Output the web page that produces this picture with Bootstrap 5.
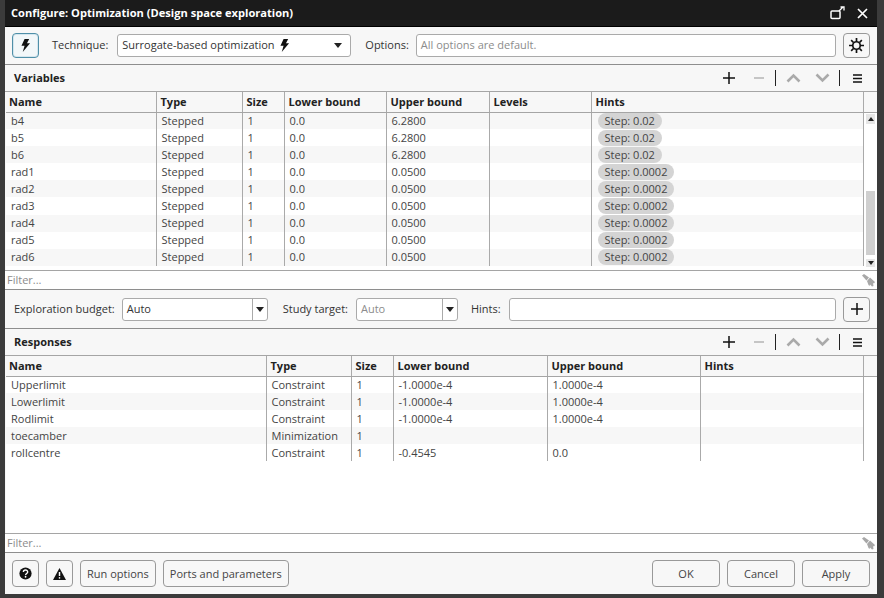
<!DOCTYPE html>
<html lang="en"><head><meta charset="utf-8">
<title>Configure</title>
<link href="https://cdn.jsdelivr.net/npm/bootstrap@5.3.0/dist/css/bootstrap.min.css" rel="stylesheet">
<style>
html,body{height:100%;margin:0}
body{background:#3b3b3b;font-family:"Open Sans",sans-serif;font-size:11px;color:#333;overflow:hidden}
.win{width:872px;height:594px;margin-left:5px;background:#f7f7f7;display:flex;flex-direction:column}
.ttl{height:27px;background:#1b1b1b;color:#fff;font-weight:700;font-size:11.1px;padding:0 9px 0 6px;flex:none;border-bottom:1px solid #000}
.ttl-ic{column-gap:12px}
.bar{height:38px;flex:none;padding:0 7px;gap:6px;border-bottom:1px solid #8e8e8e}
.bar2{height:39px}
.sec{height:27px;flex:none;padding:0 5px 0 9px;border-bottom:1px solid #a5a5a5;font-weight:700;color:#222}
.fld{height:23px;border:1px solid #aaa;border-radius:3px;background:#fff;padding:0 4px;display:flex;align-items:center;color:#333;white-space:nowrap}
.fld.dim{color:#8c8c8c}
.ib{width:27px;height:25px;padding:0;border:1px solid #999;border-radius:4px;background:#f7f7f7;display:flex;align-items:center;justify-content:center;flex:none}
.ib.act{border-color:#4f8fa8;background:#f2f7f9;box-shadow:inset 0 0 0 1px #d4e6ee}
.tb{height:27px;border:1px solid #999;border-radius:4px;background:#f7f7f7;color:#444;font-size:11px;padding:0 6px;line-height:1}
.tb.wd{width:68px}
.tools svg{display:block}
.tools>span{width:29px;display:flex;justify-content:center}
.tools>span.vs{width:1px;height:16px;background:#222;flex:none;margin:0 2px}
.tools>span.vs.a{margin-right:3px}
.tools>span.p{margin-right:1px}
.tools>span.m{width:30px}
.tw{flex:none;display:flex;margin-left:1px;background:#fff}
.tv{height:178px}
.tr2{flex:1 1 auto;min-height:0}
table.g{table-layout:fixed;border-collapse:collapse;width:858px;margin:0;color:#444;flex:none;height:0}
table.g th{height:20px;background:#f7f7f7;font-weight:700;color:#222;border-bottom:1px solid #a5a5a5;border-right:1px solid #aaa;padding:0 0 0 4px;white-space:nowrap}
table.g th:first-child{padding-left:3px}
table.g td{height:17.1px;padding:0 0 0 5px;border-right:1px solid #aaa;line-height:16px;white-space:nowrap;background:#fff}
table.v tr:nth-child(odd) td,table.r tr:nth-child(even) td{background:#f7f7f7}
.v th:nth-child(1){width:150px}.v th:nth-child(2){width:86px}.v th:nth-child(3){width:42px}.v th:nth-child(4){width:102px}.v th:nth-child(5){width:103px}.v th:nth-child(6){width:102px}
.r th:nth-child(1){width:260px}.r th:nth-child(2){width:85px}.r th:nth-child(3){width:42px}.r th:nth-child(4){width:154px}.r th:nth-child(5){width:153px}
.pill{display:inline-block;background:#d4d4d4;border-radius:8px;padding:0 7px;height:16px;line-height:16px;margin-left:1px;color:#444}
.sb{width:13px;flex:none;background:#fff;display:flex;flex-direction:column}
.hd{height:21px;border-bottom:1px solid #a5a5a5;background:#f7f7f7;flex:none}
.sb i{display:block;height:10px;background:#e6e6e6;position:relative;margin:1px 2px 0;flex:none}
.sb i::after{content:"";position:absolute;left:2px;top:3px;border:3px solid transparent;border-top:0;border-bottom:4px solid #222}
.sb i.dn{margin-top:4px;height:8px}
.sb i.dn::after{transform:rotate(180deg);top:2px}
.sb b{display:block;background:#cfcfcf;margin:0 2px;flex:none;height:64px}
.sb u{display:block;flex:none;height:67px}
.flt{height:18px;flex:none;background:#fff;border-top:1px solid #a5a5a5;border-bottom:1px solid #8e8e8e;padding:0 2px;color:#8c8c8c;box-sizing:content-box}
.caret{width:0;height:0;border:4px solid transparent;border-bottom:0;border-top:5px solid #222}
.sp{width:15px;border-left:1px solid #aaa;align-self:stretch;display:flex;align-items:center;justify-content:center;margin-right:-4px;margin-left:auto}
.foot{height:41px;flex:none;padding:0 7px;gap:7px}
.l-tech{margin-left:7px;margin-right:3px}
.f-tech{width:234px}
.l-opt{margin-left:8px;margin-right:1px}
.f-opt{margin-right:1px}
.l-exp{margin-left:2px;margin-right:1px}
.f-exp{width:146px}
.l-study{margin-left:9px;margin-right:2px}
.f-study{width:102px}
.l-hint{margin-left:7px;margin-right:2px}
</style></head>
<body>
<svg width="0" height="0" class="d-none"><defs>
<symbol id="bolt" viewBox="0 0 12 14"><path d="M5 0h5L7.600 4.600H11L3 14l2-6.600H1.600z" fill="#111"/></symbol>
<symbol id="plus" viewBox="0 0 12 12"><path d="M6 0v12M0 6h12" stroke="#111" stroke-width="1.500" fill="none"/></symbol>
<symbol id="minus" viewBox="0 0 12 12"><path d="M1 6h10" stroke="#b5b5b5" stroke-width="1.500" fill="none"/></symbol>
<symbol id="up" viewBox="0 0 15 10"><path d="M1.500 8.500l6-6 6 6" stroke="#aaa" stroke-width="2.600" fill="none"/></symbol>
<symbol id="down" viewBox="0 0 15 10"><path d="M1.500 1.500l6 6 6-6" stroke="#aaa" stroke-width="2.600" fill="none"/></symbol>
<symbol id="menu" viewBox="0 0 9 9"><path d="M0 1h9M0 4.500h9M0 8h9" stroke="#111" stroke-width="1.500" fill="none"/></symbol>
<symbol id="brush" viewBox="0 0 13 13"><path d="M0 1.500L2 0l5 3.500-2.500 3z" fill="#a8a8a8"/><path d="M5 7l3-3.500 5 4.500-1 1.500-1-.5.500 3-1.500.500-2-2-.5 1.500-1-1z" fill="#a8a8a8"/></symbol>
</defs></svg>
<div class="win">
 <div class="ttl d-flex align-items-center justify-content-between">
  <span>Configure: Optimization (Design space exploration)</span>
  <span class="ttl-ic d-flex align-items-center">
   <svg width="15" height="14" viewBox="0 0 15 14"><rect x="1" y="5" width="9" height="7.500" rx="1" fill="none" stroke="#fff" stroke-width="1.500"/><path d="M9 5l4-4M10.500 1H14v3.500" stroke="#fff" stroke-width="1.300" fill="none"/></svg>
   <svg width="11" height="11" viewBox="0 0 11 11"><path d="M1 1l9 9M10 1l-9 9" stroke="#fff" stroke-width="1.700"/></svg>
  </span>
 </div>
 <div class="bar d-flex align-items-center">
  <button class="ib act" type="button"><svg width="11" height="13"><use href="#bolt"/></svg></button>
  <span class="l-tech">Technique:</span>
  <div class="fld f-tech"><span>Surrogate-based optimization</span><svg class="ms-1" width="11" height="13"><use href="#bolt"/></svg><span class="caret ms-auto me-1"></span></div>
  <span class="l-opt">Options:</span>
  <div class="fld f-opt dim flex-grow-1">All options are default.</div>
  <button class="ib" type="button"><svg width="15" height="15" viewBox="0 0 16 16"><circle cx="8" cy="8" r="4" fill="none" stroke="#111" stroke-width="1.800"/><path d="M8 0v3.500M8 12.500V16M0 8h3.500M12.500 8H16M2.300 2.300l2.500 2.500M11.200 11.200l2.500 2.500M13.700 2.300l-2.500 2.500M4.800 11.200l-2.500 2.500" stroke="#111" stroke-width="1.800"/></svg></button>
 </div>
 <div class="sec d-flex align-items-center justify-content-between">
  <span>Variables</span>
  <div class="tools d-flex align-items-center">
   <span class="p"><svg width="12" height="12"><use href="#plus"/></svg></span><span><svg width="12" height="12"><use href="#minus"/></svg></span><span class="vs a"></span>
   <span><svg width="15" height="10"><use href="#up"/></svg></span><span><svg width="15" height="10"><use href="#down"/></svg></span><span class="vs"></span>
   <span class="m"><svg width="9" height="9"><use href="#menu"/></svg></span>
  </div>
 </div>
 <div class="tw tv">
  <table class="g v"><thead><tr><th>Name</th><th>Type</th><th>Size</th><th>Lower bound</th><th>Upper bound</th><th>Levels</th><th>Hints</th></tr></thead><tbody>
  <tr><td>b4</td><td>Stepped</td><td>1</td><td>0.0</td><td>6.2800</td><td></td><td><span class="pill">Step: 0.02</span></td></tr>
  <tr><td>b5</td><td>Stepped</td><td>1</td><td>0.0</td><td>6.2800</td><td></td><td><span class="pill">Step: 0.02</span></td></tr>
  <tr><td>b6</td><td>Stepped</td><td>1</td><td>0.0</td><td>6.2800</td><td></td><td><span class="pill">Step: 0.02</span></td></tr>
  <tr><td>rad1</td><td>Stepped</td><td>1</td><td>0.0</td><td>0.0500</td><td></td><td><span class="pill">Step: 0.0002</span></td></tr>
  <tr><td>rad2</td><td>Stepped</td><td>1</td><td>0.0</td><td>0.0500</td><td></td><td><span class="pill">Step: 0.0002</span></td></tr>
  <tr><td>rad3</td><td>Stepped</td><td>1</td><td>0.0</td><td>0.0500</td><td></td><td><span class="pill">Step: 0.0002</span></td></tr>
  <tr><td>rad4</td><td>Stepped</td><td>1</td><td>0.0</td><td>0.0500</td><td></td><td><span class="pill">Step: 0.0002</span></td></tr>
  <tr><td>rad5</td><td>Stepped</td><td>1</td><td>0.0</td><td>0.0500</td><td></td><td><span class="pill">Step: 0.0002</span></td></tr>
  <tr><td>rad6</td><td>Stepped</td><td>1</td><td>0.0</td><td>0.0500</td><td></td><td><span class="pill">Step: 0.0002</span></td></tr>
  </tbody></table>
  <div class="sb"><div class="hd"></div><i></i><u></u><b></b><i class="dn"></i></div>
 </div>
 <div class="flt d-flex align-items-center justify-content-between"><span>Filter...</span><svg width="13" height="13"><use href="#brush"/></svg></div>
 <div class="bar bar2 d-flex align-items-center">
  <span class="l-exp">Exploration budget:</span>
  <div class="fld f-exp"><span>Auto</span><span class="sp"><span class="caret"></span></span></div>
  <span class="l-study">Study target:</span>
  <div class="fld dim f-study"><span>Auto</span><span class="sp"><span class="caret"></span></span></div>
  <span class="l-hint">Hints:</span>
  <div class="fld f-opt flex-grow-1"></div>
  <button class="ib" type="button"><svg width="12" height="12"><use href="#plus"/></svg></button>
 </div>
 <div class="sec d-flex align-items-center justify-content-between">
  <span>Responses</span>
  <div class="tools d-flex align-items-center">
   <span class="p"><svg width="12" height="12"><use href="#plus"/></svg></span><span><svg width="12" height="12"><use href="#minus"/></svg></span><span class="vs a"></span>
   <span><svg width="15" height="10"><use href="#up"/></svg></span><span><svg width="15" height="10"><use href="#down"/></svg></span><span class="vs"></span>
   <span class="m"><svg width="9" height="9"><use href="#menu"/></svg></span>
  </div>
 </div>
 <div class="tw tr2 align-items-start">
  <table class="g r"><thead><tr><th>Name</th><th>Type</th><th>Size</th><th>Lower bound</th><th>Upper bound</th><th>Hints</th></tr></thead><tbody>
  <tr><td>Upperlimit</td><td>Constraint</td><td>1</td><td>-1.0000e-4</td><td>1.0000e-4</td><td></td></tr>
  <tr><td>Lowerlimit</td><td>Constraint</td><td>1</td><td>-1.0000e-4</td><td>1.0000e-4</td><td></td></tr>
  <tr><td>Rodlimit</td><td>Constraint</td><td>1</td><td>-1.0000e-4</td><td>1.0000e-4</td><td></td></tr>
  <tr><td>toecamber</td><td>Minimization</td><td>1</td><td></td><td></td><td></td></tr>
  <tr><td>rollcentre</td><td>Constraint</td><td>1</td><td>-0.4545</td><td>0.0</td><td></td></tr>
  </tbody></table>
  <div class="sb"><div class="hd"></div></div>
 </div>
 <div class="flt d-flex align-items-center justify-content-between"><span>Filter...</span><svg width="13" height="13"><use href="#brush"/></svg></div>
 <div class="foot d-flex align-items-center">
  <button class="ib tb" type="button"><svg width="15" height="15" viewBox="0 0 16 16"><circle cx="8" cy="8" r="7.500" fill="#111"/><path d="M5.400 6.200c0-3.300 5.300-3.300 5.300-.1 0 1.900-2.500 1.900-2.500 3.700" stroke="#fff" stroke-width="1.700" fill="none"/><circle cx="8.100" cy="12" r="1.100" fill="#fff"/></svg></button>
  <button class="ib tb" type="button"><svg width="15" height="14" viewBox="0 0 16 15"><path d="M8 0l8 15H0z" fill="#111"/><path d="M8 5v5" stroke="#fff" stroke-width="1.800"/><circle cx="8" cy="12.300" r="1" fill="#fff"/></svg></button>
  <button class="tb" type="button">Run options</button>
  <button class="tb" type="button">Ports and parameters</button>
  <button class="tb wd ms-auto" type="button">OK</button>
  <button class="tb wd" type="button">Cancel</button>
  <button class="tb wd" type="button">Apply</button>
 </div>
</div>
<script src="https://cdn.jsdelivr.net/npm/bootstrap@5.3.0/dist/js/bootstrap.bundle.min.js"></script>
</body></html>
